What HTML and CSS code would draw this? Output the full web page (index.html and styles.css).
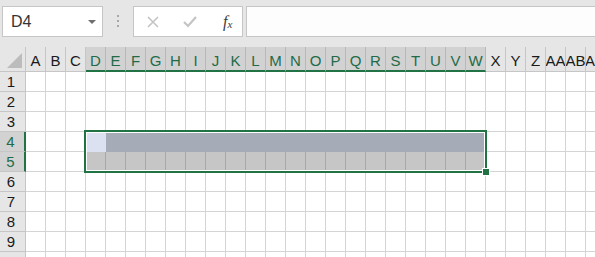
FILE: index.html
```
<!DOCTYPE html>
<html lang="ja">
<head>
    <meta charset="UTF-8">
    <title>Sheet</title>
    <link rel="stylesheet" href="styles.css">
</head>
<body>

<div class="toolbar">
    <div class="name-box">
        <span>D4</span>
        <span class="caret"></span>
    </div>
    <div class="dots"><i></i><i></i><i></i></div>
    <div class="fx-buttons">
        <svg class="btn-icon" width="14" height="14" viewBox="0 0 14 14">
            <path d="M2 2 L12 12 M12 2 L2 12" stroke="#c4c4c4" stroke-width="1.6" fill="none"/>
        </svg>
        <svg class="btn-icon" width="16" height="14" viewBox="0 0 16 14">
            <path d="M2 7 L6 11 L14 2" stroke="#c4c4c4" stroke-width="2.2" fill="none"/>
        </svg>
        <span class="fx">f<sub>x</sub></span>
    </div>
    <div class="formula-input"></div>
</div>

<div class="sheet" id="sheet">
    <div class="selection"><div class="handle"></div></div>
</div>

<script>
    const sheet = document.getElementById('sheet');
    const cols = ['A','B','C','D','E','F','G','H','I','J','K','L','M','N','O','P','Q','R','S','T','U','V','W','X','Y','Z','AA','AB','AC'];
    const rows = 10;

    const inRange = (c) => c >= 3 && c <= 22; // D..W

    const corner = document.createElement('div');
    corner.className = 'corner';
    sheet.appendChild(corner);

    cols.forEach((name, i) => {
        const h = document.createElement('div');
        h.className = 'col-head' + (inRange(i) ? ' picked' : '');
        h.textContent = name;
        sheet.appendChild(h);
    });

    for (let r = 1; r <= rows; r++) {
        const rh = document.createElement('div');
        rh.className = 'row-head' + (r === 4 || r === 5 ? ' picked' : '');
        rh.textContent = r;
        sheet.appendChild(rh);
        cols.forEach((name, i) => {
            const cell = document.createElement('div');
            cell.className = 'cell';
            if (inRange(i) && r === 4) cell.className += i === 3 ? ' active' : ' band';
            if (inRange(i) && r === 5) cell.className += ' shade';
            sheet.appendChild(cell);
        });
    }
</script>

</body>
</html>
```

FILE: styles.css
```
body {
    margin: 0;
    height: 257px;
    background-color: #e6e6e6;
    font-family: 'Liberation Sans', Arial, sans-serif;
    overflow: hidden;
}
.toolbar {
    display: flex;
    align-items: flex-start;
    height: 47px;
    padding: 6px 0 0 2px;
    box-sizing: border-box;
}
.name-box {
    display: flex;
    align-items: center;
    justify-content: space-between;
    width: 101px;
    height: 31px;
    box-sizing: border-box;
    padding: 0 6px 0 8px;
    background-color: #fff;
    border: 1px solid #c6c6c6;
    font-size: 16px;
    color: #333;
}
.caret {
    width: 0;
    height: 0;
    border-left: 4px solid transparent;
    border-right: 4px solid transparent;
    border-top: 4px solid #6e6e6e;
}
.dots {
    display: flex;
    flex-direction: column;
    gap: 3px;
    margin: 9px 14px 0 14px;
}
.dots i {
    width: 2px;
    height: 2px;
    background-color: #a8a8a8;
}
.fx-buttons {
    display: flex;
    align-items: center;
    width: 110px;
    height: 31px;
    box-sizing: border-box;
    padding-left: 12px;
    gap: 22px;
    background-color: #fff;
    border: 1px solid #c6c6c6;
}
.fx {
    font-family: 'Liberation Serif', serif;
    font-style: italic;
    font-size: 16px;
    color: #3c3c3c;
    margin-left: 3px;
}
.fx sub {
    font-size: 11px;
    vertical-align: -1px;
}
.formula-input {
    flex: 1;
    height: 31px;
    box-sizing: border-box;
    margin-left: 3px;
    background-color: #fdfdfd;
    border: 1px solid #c6c6c6;
    border-right: none;
}

/* grid */
.sheet {
    position: relative;
    display: grid;
    grid-template-columns: 26px repeat(29, 20px);
    grid-template-rows: 25px repeat(10, 20px);
    overflow: hidden;
    width: 595px;
    height: 210px;
    background-color: #fff;
}
.sheet > div {
    box-sizing: border-box;
}
.corner {
    position: relative;
    background-color: #e6e6e6;
    border-right: 1px solid #c6c6c6;
    border-bottom: 1px solid #c6c6c6;
}
.corner::after {
    content: "";
    position: absolute;
    right: 3px;
    bottom: 3px;
    width: 15px;
    height: 15px;
    background-color: #bcbcbc;
    clip-path: polygon(100% 0, 100% 100%, 0 100%);
}
.col-head {
    display: flex;
    align-items: center;
    justify-content: center;
    padding-top: 3px;
    background-color: #e6e6e6;
    border-right: 1px solid #c6c6c6;
    border-bottom: 1px solid #c6c6c6;
    font-size: 15px;
    color: #1a1a1a;
    white-space: nowrap;
    overflow: hidden;
}
.col-head.picked {
    background-color: #d2d2d2;
    color: #1f6b47;
    border-right-color: #b8b8b8;
    border-bottom: 2px solid #217346;
}
.row-head {
    display: flex;
    align-items: center;
    justify-content: center;
    padding-right: 3px;
    background-color: #e6e6e6;
    border-right: 1px solid #c6c6c6;
    border-bottom: 1px solid #c6c6c6;
    font-size: 15px;
    color: #1a1a1a;
}
.row-head.picked {
    background-color: #d2d2d2;
    color: #1f6b47;
    border-right: 2px solid #217346;
}
.cell {
    border-right: 1px solid #d4d4d4;
    border-bottom: 1px solid #d4d4d4;
}
.cell.band {
    background-color: #a6abb8;
    border-color: #a6abb8;
}
.cell.active {
    background-color: #dce1f2;
    border-color: #dce1f2;
}
.cell.shade {
    background-color: #c6c6c6;
    border-right-color: #a8a8a8;
    border-bottom-color: #c6c6c6;
}
.selection {
    position: absolute;
    left: 84px;
    top: 83px;
    width: 403px;
    height: 43px;
    box-sizing: border-box;
    border: 2px solid #217346;
    box-shadow: inset 0 0 0 1px #fff;
}
.handle {
    position: absolute;
    right: -5px;
    bottom: -5px;
    width: 6px;
    height: 6px;
    background-color: #217346;
    border: 1px solid #fff;
}
```
